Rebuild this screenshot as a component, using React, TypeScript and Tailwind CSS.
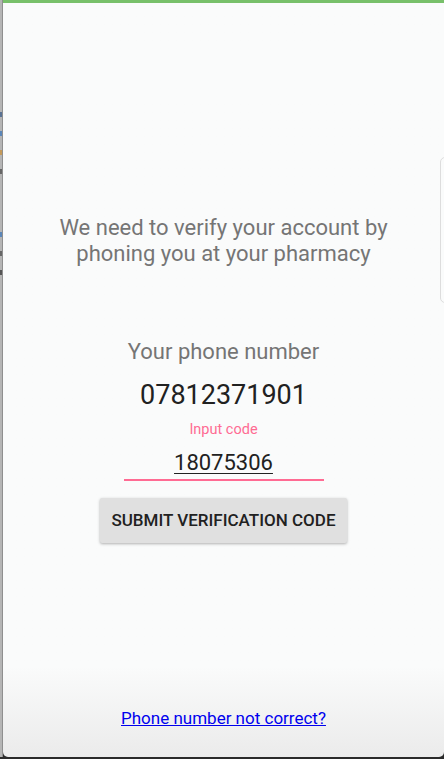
import React from "react";

export default function App() {
  return (
    <div className="w-[444px] h-[759px] bg-[#2a2a2a] flex overflow-hidden" style={{ fontFamily: "Roboto, 'Noto Sans', sans-serif" }}>
      <div className="w-[3px] h-[757px] bg-[#b5b5b5] border-r border-[#8f8f8f] flex flex-col pt-[112px] gap-[14px] shrink-0">
        <div className="h-[5px] w-[2px] bg-[#5a7394]" />
        <div className="h-[5px] w-[2px] bg-[#5b86b8]" />
        <div className="h-[5px] w-[2px] bg-[#c49a5a]" />
        <div className="h-[5px] w-[2px] bg-[#666]" />
        <div className="h-[30px]" />
        <div className="h-[5px] w-[2px] bg-[#5b86b8]" />
        <div className="h-[5px] w-[2px] bg-[#666]" />
        <div className="h-[5px] w-[2px] bg-[#555]" />
      </div>
      <div className="relative flex-1 h-[757px] rounded-b-[5px] bg-gradient-to-b from-[#fafbfb] from-[88%] to-[#ebebeb] flex flex-col items-center">
        <div className="w-full h-[3px] bg-[#78c06a]" />
        <div className="absolute right-[-6px] top-[157px] w-[10px] h-[146px] rounded-[6px] border border-[#dddddd]" />
        <p className="mt-[212px] px-[30px] text-center text-[22px] leading-[26px] text-[#757575]">
          We need to verify your account by phoning you at your pharmacy
        </p>
        <p className="mt-[72px] text-[22px] leading-[26px] text-[#757575]">Your phone number</p>
        <p className="mt-[14px] text-[27px] leading-[32px] text-[#212121]">07812371901</p>
        <p className="mt-[9px] text-[14.5px] leading-[20px] text-[#ff6b93]">Input code</p>
        <p className="mt-[9px] text-[22px] leading-[28px] text-[#212121] underline underline-offset-[3px] decoration-1">18075306</p>
        <div className="mt-[2px] w-[200px] h-[2px] bg-[#ff6b93]" />
        <button className="mt-[17px] w-[247px] h-[45px] bg-[#e0e0e0] rounded-[2px] shadow-[0_1px_3px_rgba(0,0,0,0.3)] text-[17px] font-medium text-[#212121]">
          SUBMIT VERIFICATION CODE
        </button>
        <a href="#" className="mt-auto mb-[29px] text-[17px] leading-[20px] text-[#0000ee] underline">
          Phone number not correct?
        </a>
      </div>
    </div>
  );
}
